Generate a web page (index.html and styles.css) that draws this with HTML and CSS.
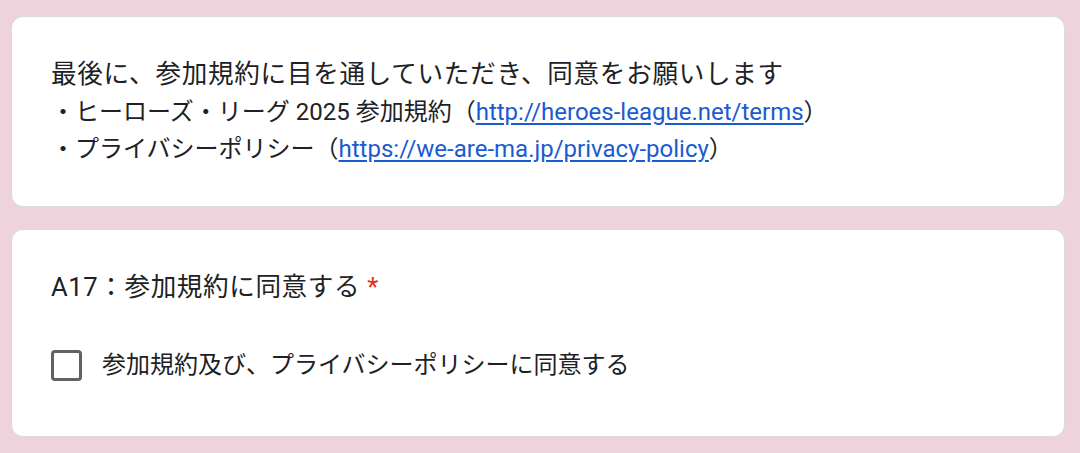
FILE: index.html
```html
<!DOCTYPE html>
<html lang="ja">
<head>
<meta charset="utf-8">
<title>参加規約</title>
<link rel="stylesheet" href="styles.css">
</head>
<body>
<main class="form">
  <section class="card card-desc">
    <p class="line line-lead">最後に、参加規約に目を通していただき、同意をお願いします</p>
    <p class="line line-item">・ヒーローズ・リーグ 2025 参加規約（<a href="#" class="link">http://heroes-league.net/terms</a>）</p>
    <p class="line line-item">・プライバシーポリシー（<a href="#" class="link">https://we-are-ma.jp/privacy-policy</a>）</p>
  </section>
  <section class="card card-question">
    <div class="q-title">A17：参加規約に同意する <span class="required">*</span></div>
    <label class="option">
      <span class="checkbox"></span>
      <span class="option-text">参加規約及び、プライバシーポリシーに同意する</span>
    </label>
  </section>
</main>
</body>
</html>
```
FILE: styles.css
```css
html, body {
  margin: 0;
  padding: 0;
}
body {
  background: #efd3dc;
  font-family: Roboto, "Noto Sans CJK JP", sans-serif;
  color: #202124;
}
.form {
  padding: 16px 15px 0 11px;
  display: flex;
  flex-direction: column;
  gap: 22px;
}
.card {
  background: #ffffff;
  border: 1px solid #dcd9dc;
  border-radius: 12px;
  box-sizing: border-box;
}
.card-desc {
  height: 191px;
  padding: 39px 39px 0 39px;
}
.line {
  margin: 0;
  line-height: 37.5px;
  white-space: nowrap;
}
.line-lead {
  font-size: 25.6px;
  letter-spacing: 0.7px;
}
.line-item {
  font-size: 24px;
}
.link {
  color: #1a5bd1;
  text-decoration: underline;
  text-underline-offset: 3px;
}
.card-question {
  height: 208px;
  padding: 38px 39px 0 39px;
}
.q-title {
  font-size: 25.6px;
  line-height: 38.4px;
  letter-spacing: 0.6px;
}
.required {
  color: #d93025;
}
.option {
  display: flex;
  align-items: center;
  gap: 20px;
  margin-top: 44px;
}
.checkbox {
  width: 31px;
  height: 31px;
  box-sizing: border-box;
  border: 3px solid #5f6368;
  border-radius: 4px;
  flex: none;
}
.option-text {
  font-size: 24px;
  line-height: 31px;
}
```
